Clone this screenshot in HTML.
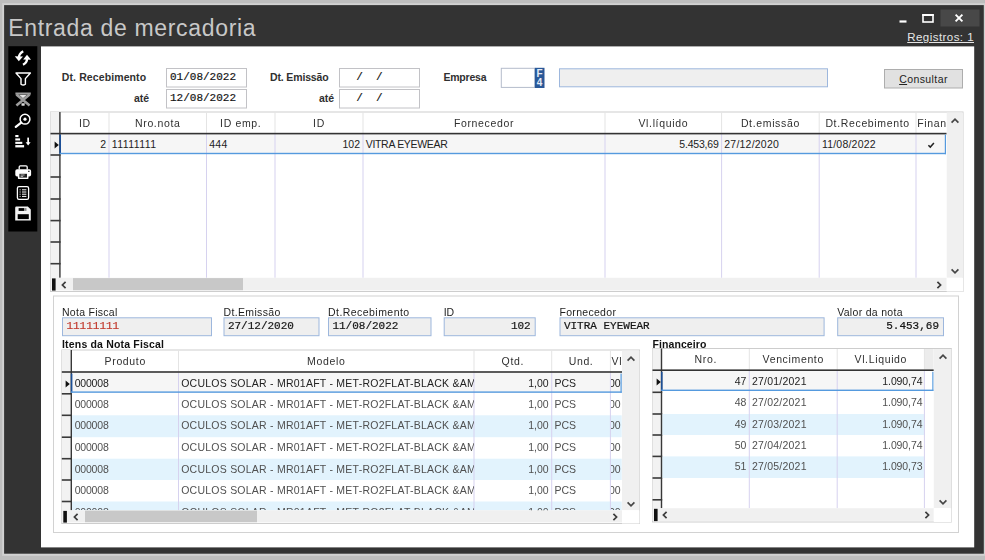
<!DOCTYPE html><html lang="pt-BR"><head><meta charset="utf-8"><title>Entrada de mercadoria</title><style>
html,body{margin:0;padding:0}
body{width:985px;height:560px;background:#bebebe;overflow:hidden;position:relative;font-family:"Liberation Sans",sans-serif;font-size:10.5px;color:#222}
div{position:absolute;box-sizing:border-box}
svg{position:absolute;overflow:visible}
.t{white-space:pre;line-height:14px;height:14px}
.lb{font-weight:bold;font-size:10.5px;color:#303030}
.ln{font-size:10.5px;color:#1e1e1e}
.mono{font-family:"Liberation Mono",monospace;font-size:11px;color:#141414;-webkit-text-stroke:0.2px}
.hd{font-size:10.5px;color:#303030;letter-spacing:0.65px}
.c{font-size:10.5px;color:#222}
.g{font-size:10.5px;color:#505050}
.inp{background:#fff;border:1px solid #bdbdbd}
.dis{background:#efefef;border:1px solid #9db7dd}
.ind{background:#f1f1f1;border-left:1px solid #d0d0d0}
</style></head><body><div id="app" style="left:0;top:0;width:985px;height:560px;filter:blur(0.4px)">
<svg style="left:0;top:0" width="985" height="560" viewBox="0 0 985 560"><rect x="2.2" y="3.2" width="983" height="552.6" fill="#d2d2d2"/><rect x="4.1" y="5.1" width="979.7" height="548.6" fill="#333"/><rect x="41" y="46.4" width="933.2" height="501" fill="#fff"/><rect x="8.3" y="46.2" width="29" height="185.3" fill="#000"/></svg>
<div class="t" style="left:8.2px;top:12.7px;font-size:23px;line-height:30px;height:30px;color:#c8c8c8;letter-spacing:0.67px">Entrada de mercadoria</div>
<svg style="left:0;top:0" width="985" height="560" viewBox="0 0 985 560"><rect x="940.5" y="9.5" width="39.0" height="17.0" fill="#484848"/></svg>
<svg style="left:895px;top:8px" width="90" height="22" viewBox="895 8 90 22"><g stroke="#fff" fill="none"><path d="M899.5 21.5h7" stroke-width="2.2"/><rect x="923" y="15" width="10" height="7" stroke-width="1.6"/><path d="M922.2 15h11.6" stroke-width="2"/><path d="M955.6 14.6l6.8 6.8M962.4 14.6l-6.8 6.8" stroke-width="1.9"/></g></svg>
<div class="t" style="right:11px;top:30px;font-size:11.5px;color:#e6e6e6;text-decoration:underline;letter-spacing:0.45px">Registros: 1</div>
<svg style="left:8px;top:46px" width="30" height="186" viewBox="8 46 30 186"><g stroke="#fff" fill="none" stroke-width="2.3"><path d="M23.2 51.2 C20.2 53 18.8 55 19 57.6"/><path d="M23 64.8 C26 63.2 27.2 61.2 27 58.4"/></g><g fill="#fff"><path d="M14.8 56.2 L23 56.6 L18.8 61.2z"/><path d="M31 59.8 L23.2 59.4 L27 54.8z"/></g><path d="M16 73 h14.4 l-5 5.6 v5.6 q-2.2 1.6 -4.4 0 v-5.6z" fill="none" stroke="#fff" stroke-width="1.4" stroke-linejoin="round"/><g stroke="#9c9c9c" fill="none"><path d="M15.4 93.6 h15.4" stroke-width="2.2"/><path d="M16.4 94.6 l13.2 11M29.6 94.6 l-13.2 11" stroke-width="2.6"/></g><path d="M19.4 95 h7.2 l-3.6 3.2z" fill="#e8e8e8"/><path d="M21.4 103.2 h3.4 l-0.2 2.6 h-3z" fill="#d8d8d8"/><g stroke="#fff" fill="none"><circle cx="25" cy="119.2" r="4.9" stroke-width="1.5"/><path d="M21.2 122.6 l-5.4 4.2" stroke-width="2.3" stroke-linecap="round"/></g><circle cx="25" cy="119.2" r="1.6" fill="#fff"/><g fill="#fff"><rect x="15.3" y="135" width="3.2" height="2.1"/><rect x="15.3" y="138.4" width="4.8" height="2.1"/><rect x="15.3" y="141.8" width="7" height="2.1"/><rect x="15.3" y="145.1" width="8.8" height="2.3"/><rect x="27.3" y="137.6" width="1.7" height="5.4"/><path d="M25.7 142.2h4.9l-2.45 3.2z"/></g><path d="M19.2 169.4 v-2.4 q0 -1.2 1.2 -1.2 h5.6 q1.2 0 1.2 1.2 v2.4" fill="none" stroke="#fff" stroke-width="1.3"/><rect x="15.3" y="169.2" width="15.8" height="7.4" rx="1.8" fill="#fff"/><rect x="17.9" y="172.6" width="10.6" height="6.4" rx="0.8" fill="#fff"/><rect x="19.4" y="173.8" width="7.6" height="3.8" fill="#222"/><path d="M20.6 175h4M20.6 176.4h2.6" stroke="#ddd" stroke-width="0.8"/><rect x="28" y="170.8" width="1.6" height="1" fill="#222"/><rect x="17.4" y="186.6" width="11.2" height="12.8" rx="1.6" fill="none" stroke="#fff" stroke-width="1.3"/><path d="M19.6 189.8h1M22 189.8h4.4M19.6 192h1M22 192h4.4M19.6 194.2h1M22 194.2h4.4M19.6 196.4h1M22 196.4h4.4" stroke="#fff" stroke-width="1"/><path d="M16.4 206.6 h11.4 l3 3 v11 h-15.6 v-12.8 q0 -1.2 1.2 -1.2z" fill="#f4f4f4"/><rect x="18.6" y="208.1" width="5.8" height="2.8" fill="#000"/><rect x="25" y="208.1" width="1.5" height="2.8" fill="#8a8a8a"/><rect x="17.7" y="214.2" width="11.1" height="4.9" fill="#000"/></svg>
<div class="t lb" style="right:838.8px;top:70px;letter-spacing:0.1px">Dt. Recebimento</div>
<div class="t lb" style="right:835.8px;top:91.4px;">até</div>
<svg style="left:0;top:0" width="985" height="560" viewBox="0 0 985 560"><rect x="166.5" y="68.5" width="80" height="18.5" fill="#fff" stroke="#c2c2c6"/></svg>
<div class="t mono" style="left:170px;top:70.3px;">01/08/2022</div>
<svg style="left:0;top:0" width="985" height="560" viewBox="0 0 985 560"><rect x="166.5" y="89.5" width="80" height="18.5" fill="#fff" stroke="#c2c2c6"/></svg>
<div class="t mono" style="left:170px;top:91.3px;">12/08/2022</div>
<svg style="left:0;top:0" width="985" height="560" viewBox="0 0 985 560"><rect x="339.5" y="68.5" width="80" height="18.5" fill="#fff" stroke="#c2c2c6"/></svg>
<div class="t mono" style="left:343px;top:70.3px;">  /  /</div>
<svg style="left:0;top:0" width="985" height="560" viewBox="0 0 985 560"><rect x="339.5" y="89.5" width="80" height="18.5" fill="#fff" stroke="#c2c2c6"/></svg>
<div class="t mono" style="left:343px;top:91.3px;">  /  /</div>
<div class="t lb" style="right:656.5px;top:70px;letter-spacing:-0.15px">Dt. Emissão</div>
<div class="t lb" style="right:650.8px;top:91.4px;">até</div>
<div class="t lb" style="left:443.4px;top:70.3px;letter-spacing:-0.2px">Empresa</div>
<svg style="left:0;top:0" width="985" height="560" viewBox="0 0 985 560"><rect x="501.3" y="68.3" width="33.6" height="19.1" fill="#fff" stroke="#b4bccb"/><rect x="534.8" y="67.8" width="9.7" height="20.2" fill="#2a5898"/></svg>
<div class="t" style="left:535px;top:68.6px;width:9.3px;text-align:center;font-size:10px;line-height:9.6px;height:20px;color:#e4ecf7;font-weight:bold;white-space:normal">F<br>4</div>
<svg style="left:0;top:0" width="985" height="560" viewBox="0 0 985 560"><rect x="559.5" y="68.8" width="268" height="18.0" fill="#efefef" stroke="#9db7dd"/><rect x="884.5" y="69.5" width="78" height="18.5" fill="#e1e1e1" stroke="#adadad"/></svg>
<div class="t" style="left:884px;width:79px;text-align:center;top:72px;font-size:10.5px;color:#222;letter-spacing:0.42px"><u>C</u>onsultar</div>
<svg style="left:0;top:0" width="985" height="560" viewBox="0 0 985 560"><rect x="50.5" y="112.0" width="912.5" height="179.5" fill="#fff" stroke="#cdcdcd"/><rect x="50.5" y="112.0" width="10.1" height="165.8" fill="#f2f2f2"/><rect x="50.5" y="154.2" width="10.1" height="1.6" fill="#3a3a3a"/><rect x="50.5" y="176.2" width="10.1" height="1.6" fill="#3a3a3a"/><rect x="50.5" y="198.2" width="10.1" height="1.6" fill="#3a3a3a"/><rect x="50.5" y="219.79999999999998" width="10.1" height="1.6" fill="#3a3a3a"/><rect x="50.5" y="241.2" width="10.1" height="1.6" fill="#3a3a3a"/><rect x="50.5" y="262.9" width="10.1" height="1.6" fill="#3a3a3a"/><rect x="108.5" y="112.5" width="1.0" height="20.5" fill="#e4e4e4"/><rect x="206.0" y="112.5" width="1.0" height="20.5" fill="#e4e4e4"/><rect x="274.5" y="112.5" width="1.0" height="20.5" fill="#e4e4e4"/><rect x="362.5" y="112.5" width="1.0" height="20.5" fill="#e4e4e4"/><rect x="604.5" y="112.5" width="1.0" height="20.5" fill="#e4e4e4"/><rect x="721.1" y="112.5" width="1.0" height="20.5" fill="#e4e4e4"/><rect x="818.7" y="112.5" width="1.0" height="20.5" fill="#e4e4e4"/><rect x="915.5" y="112.5" width="1.0" height="20.5" fill="#e4e4e4"/><rect x="60.6" y="134" width="885.4" height="20" fill="#f6f6f6"/><rect x="108.5" y="134" width="1.0" height="143.8" fill="#d6d2ef"/><rect x="206.0" y="134" width="1.0" height="143.8" fill="#d6d2ef"/><rect x="274.5" y="134" width="1.0" height="143.8" fill="#d6d2ef"/><rect x="362.5" y="134" width="1.0" height="143.8" fill="#d6d2ef"/><rect x="604.5" y="134" width="1.0" height="143.8" fill="#d6d2ef"/><rect x="721.1" y="134" width="1.0" height="143.8" fill="#d6d2ef"/><rect x="818.7" y="134" width="1.0" height="143.8" fill="#d6d2ef"/><rect x="915.5" y="134" width="1.0" height="143.8" fill="#d6d2ef"/></svg>
<div class="t hd" style="left:-15.2px;width:200px;text-align:center;top:116px;">ID</div>
<div class="t hd" style="left:57.75px;width:200px;text-align:center;top:116px;">Nro.nota</div>
<div class="t hd" style="left:140.75px;width:200px;text-align:center;top:116px;">ID emp.</div>
<div class="t hd" style="left:219.0px;width:200px;text-align:center;top:116px;">ID</div>
<div class="t hd" style="left:384.0px;width:200px;text-align:center;top:116px;">Fornecedor</div>
<div class="t hd" style="left:563.3px;width:200px;text-align:center;top:116px;">Vl.líquido</div>
<div class="t hd" style="left:670.4px;width:200px;text-align:center;top:116px;">Dt.emissão</div>
<div class="t hd" style="left:767.6px;width:200px;text-align:center;top:116px;">Dt.Recebimento</div>
<div style="left:916px;top:112.5px;width:30.5px;height:20.5px;overflow:hidden"><div class="t hd" style="left:1.2px;top:3.5px;">Finan</div></div>
<div class="t c" style="right:879px;top:137.3px;">2</div>
<div style="left:109.5px;top:134px;width:96.5px;height:20px;overflow:hidden"><div class="t c" style="left:2.2px;top:3.3px;letter-spacing:0.45px">11111111</div></div>
<div style="left:207.0px;top:134px;width:67.5px;height:20px;overflow:hidden"><div class="t c" style="left:2.2px;top:3.3px;letter-spacing:0.3px">444</div></div>
<div class="t c" style="right:625px;top:137.3px;">102</div>
<div style="left:363.5px;top:134px;width:241.0px;height:20px;overflow:hidden"><div class="t c" style="left:2.2px;top:3.3px;letter-spacing:-0.3px">VITRA EYEWEAR</div></div>
<div class="t c" style="right:266.4px;top:137.3px;letter-spacing:-0.2px">5.453,69</div>
<div style="left:722.1px;top:134px;width:96.6px;height:20px;overflow:hidden"><div class="t c" style="left:2.2px;top:3.3px;letter-spacing:0.22px">27/12/2020</div></div>
<div style="left:819.7px;top:134px;width:95.8px;height:20px;overflow:hidden"><div class="t c" style="left:2.2px;top:3.3px;letter-spacing:0.22px">11/08/2022</div></div>
<svg style="left:925.75px;top:139.70000000000002px" width="10" height="10" viewBox="0 0 10 10"><path d="M2.4 5.2l1.9 1.9l3.6-4" fill="none" stroke="#222" stroke-width="1.5"/></svg>
<svg style="left:0;top:0" width="985" height="560" viewBox="0 0 985 560"><rect x="59.2" y="112.0" width="1.4" height="165.8" fill="#383838"/><rect x="50.5" y="132.8" width="896.2" height="1.6" fill="#333"/><rect x="59.4" y="134.6" width="1.6" height="19.4" fill="#1c4f96"/><rect x="59.6" y="152.8" width="886.4" height="1.4" fill="#559ade"/><rect x="944.8" y="134.6" width="1.2" height="19.6" fill="#559ade"/></svg>
<svg style="left:50px;top:140.2px" width="12" height="10" viewBox="0 0 12 10"><path d="M4.6 1.6v6.8l4.2-3.4z" fill="#111"/></svg>
<svg style="left:0;top:0" width="985" height="560" viewBox="0 0 985 560"><rect x="946.7" y="112.5" width="16.3" height="165.3" fill="#f0f0f0"/></svg>
<svg style="left:950.1px;top:116px" width="10" height="10" viewBox="-5 -5 10 10"><path d="M-3.4 1.6L0 -1.8L3.4 1.6" fill="none" stroke="#464646" stroke-width="1.7"/></svg>
<svg style="left:950.1px;top:265.6px" width="10" height="10" viewBox="-5 -5 10 10"><path d="M-3.4 -1.6L0 1.8L3.4 -1.6" fill="none" stroke="#464646" stroke-width="1.7"/></svg>
<svg style="left:0;top:0" width="985" height="560" viewBox="0 0 985 560"><rect x="50.5" y="277.8" width="896.2" height="12.6" fill="#f0f0f0"/><rect x="946.7" y="277.8" width="16.3" height="13.7" fill="#fff"/><rect x="73" y="278.1" width="170" height="12.1" fill="#c8c8c8"/></svg>
<svg style="left:58.6px;top:279.7px" width="10" height="10" viewBox="-5 -5 10 10"><path d="M1.6 -3.2L-1.6 0L1.6 3.2" fill="none" stroke="#3c3c3c" stroke-width="1.7"/></svg>
<svg style="left:933.5px;top:279.7px" width="10" height="10" viewBox="-5 -5 10 10"><path d="M-1.6 -3.2L1.6 0L-1.6 3.2" fill="none" stroke="#3c3c3c" stroke-width="1.7"/></svg>
<svg style="left:0;top:0" width="985" height="560" viewBox="0 0 985 560"><rect x="52" y="278.40000000000003" width="3.6" height="12.2" fill="#111"/><rect x="53.5" y="296.0" width="905" height="236.5" fill="none" stroke="#d2d2d2"/></svg>
<div class="t ln" style="left:62px;top:305.4px;letter-spacing:0.27px">Nota Fiscal</div>
<svg style="left:0;top:0" width="985" height="560" viewBox="0 0 985 560"><rect x="62.5" y="317.8" width="149" height="17.9" fill="#efefef" stroke="#9db7dd"/></svg>
<div class="t mono" style="left:66.4px;top:318.9px;color:#c2392d">11111111</div>
<div class="t ln" style="left:223.5px;top:305.4px;letter-spacing:0.35px">Dt.Emissão</div>
<svg style="left:0;top:0" width="985" height="560" viewBox="0 0 985 560"><rect x="224.0" y="317.8" width="95.0" height="17.9" fill="#efefef" stroke="#9db7dd"/></svg>
<div class="t mono" style="left:227.9px;top:318.9px;">27/12/2020</div>
<div class="t ln" style="left:328px;top:305.4px;letter-spacing:0.45px">Dt.Recebimento</div>
<svg style="left:0;top:0" width="985" height="560" viewBox="0 0 985 560"><rect x="328.5" y="317.8" width="102.5" height="17.9" fill="#efefef" stroke="#9db7dd"/></svg>
<div class="t mono" style="left:332.4px;top:318.9px;">11/08/2022</div>
<div class="t ln" style="left:443.7px;top:305.4px;letter-spacing:0px">ID</div>
<svg style="left:0;top:0" width="985" height="560" viewBox="0 0 985 560"><rect x="444.2" y="317.8" width="91.0" height="17.9" fill="#efefef" stroke="#9db7dd"/></svg>
<div class="t mono" style="right:454.3px;top:318.9px;">102</div>
<div class="t ln" style="left:559.5px;top:305.4px;letter-spacing:0.3px">Fornecedor</div>
<svg style="left:0;top:0" width="985" height="560" viewBox="0 0 985 560"><rect x="560.0" y="317.8" width="264.1" height="17.9" fill="#efefef" stroke="#9db7dd"/></svg>
<div class="t mono" style="left:563.9px;top:318.9px;">VITRA EYEWEAR</div>
<div class="t ln" style="left:837.2px;top:305.4px;letter-spacing:0.31px">Valor da nota</div>
<svg style="left:0;top:0" width="985" height="560" viewBox="0 0 985 560"><rect x="837.7" y="317.8" width="105.8" height="17.9" fill="#efefef" stroke="#9db7dd"/></svg>
<div class="t mono" style="right:46px;top:318.9px;">5.453,69</div>
<div class="t lb" style="left:62px;top:337.4px;color:#111;letter-spacing:0.18px">Itens da Nota Fiscal</div>
<div class="t lb" style="left:652.4px;top:336.6px;color:#111;letter-spacing:0.1px">Financeiro</div>
<svg style="left:0;top:0" width="985" height="560" viewBox="0 0 985 560"><rect x="61.8" y="350.0" width="577.7" height="173.5" fill="#fff" stroke="#cdcdcd"/><rect x="61.8" y="350.0" width="10.2" height="160.3" fill="#f2f2f2"/><rect x="61.8" y="393.0" width="10.2" height="1.6" fill="#3a3a3a"/><rect x="61.8" y="414.5" width="10.2" height="1.6" fill="#3a3a3a"/><rect x="61.8" y="436.4" width="10.2" height="1.6" fill="#3a3a3a"/><rect x="61.8" y="457.9" width="10.2" height="1.6" fill="#3a3a3a"/><rect x="61.8" y="479.2" width="10.2" height="1.6" fill="#3a3a3a"/><rect x="61.8" y="500.7" width="10.2" height="1.6" fill="#3a3a3a"/><rect x="178.0" y="350.5" width="1.0" height="20.9" fill="#e4e4e4"/><rect x="473.5" y="350.5" width="1.0" height="20.9" fill="#e4e4e4"/><rect x="551.2" y="350.5" width="1.0" height="20.9" fill="#e4e4e4"/><rect x="609.9" y="350.5" width="1.0" height="20.9" fill="#e4e4e4"/><rect x="72" y="373" width="549.7" height="19.6" fill="#f6f6f6"/><rect x="72" y="415.3" width="549.7" height="21.9" fill="#e2f3fd"/><rect x="72" y="458.7" width="549.7" height="21.3" fill="#e2f3fd"/><rect x="72" y="501.5" width="549.7" height="8.8" fill="#e2f3fd"/><rect x="178.0" y="372.4" width="1.0" height="137.9" fill="#d6d2ef"/><rect x="473.5" y="372.4" width="1.0" height="137.9" fill="#d6d2ef"/><rect x="551.2" y="372.4" width="1.0" height="137.9" fill="#d6d2ef"/><rect x="609.9" y="372.4" width="1.0" height="137.9" fill="#d6d2ef"/></svg>
<div class="t hd" style="left:25.25px;width:200px;text-align:center;top:353.8px;">Produto</div>
<div class="t hd" style="left:226.25px;width:200px;text-align:center;top:353.8px;">Modelo</div>
<div class="t hd" style="left:412.85px;width:200px;text-align:center;top:353.8px;">Qtd.</div>
<div class="t hd" style="left:481.05px;width:200px;text-align:center;top:353.8px;">Und.</div>
<div style="left:610.4px;top:350.5px;width:11.6px;height:20.9px;overflow:hidden"><div class="t hd" style="left:1.2px;top:3.3px;">Vl</div></div>
<div style="left:72.5px;top:373px;width:105.5px;height:19.6px;overflow:hidden"><div class="t c" style="left:2.2px;top:3px;letter-spacing:-0.2px">000008</div></div>
<div style="left:179.0px;top:373px;width:294.5px;height:19.6px;overflow:hidden"><div class="t c" style="left:2.2px;top:3px;letter-spacing:0.24px">OCULOS SOLAR - MR01AFT - MET-RO2FLAT-BLACK &amp;AM</div></div>
<div class="t c" style="right:436.3px;top:376px;">1,00</div>
<div style="left:552.2px;top:373px;width:57.7px;height:19.6px;overflow:hidden"><div class="t c" style="left:2.2px;top:3px;">PCS</div></div>
<div style="left:610.9px;top:373px;width:10.8px;height:19.6px;overflow:hidden"><div class="t c" style="right:1px;top:3px">00</div></div>
<div style="left:72.5px;top:393.8px;width:105.5px;height:21.5px;overflow:hidden"><div class="t g" style="left:2.2px;top:3.0px;letter-spacing:-0.2px">000008</div></div>
<div style="left:179.0px;top:393.8px;width:294.5px;height:21.5px;overflow:hidden"><div class="t g" style="left:2.2px;top:3.0px;letter-spacing:0.24px">OCULOS SOLAR - MR01AFT - MET-RO2FLAT-BLACK &amp;AM</div></div>
<div class="t g" style="right:436.3px;top:396.8px;">1,00</div>
<div style="left:552.2px;top:393.8px;width:57.7px;height:21.5px;overflow:hidden"><div class="t g" style="left:2.2px;top:3.0px;">PCS</div></div>
<div style="left:610.9px;top:393.8px;width:10.8px;height:21.5px;overflow:hidden"><div class="t g" style="right:1px;top:3.0px">00</div></div>
<div style="left:72.5px;top:415.3px;width:105.5px;height:21.9px;overflow:hidden"><div class="t g" style="left:2.2px;top:3.0px;letter-spacing:-0.2px">000008</div></div>
<div style="left:179.0px;top:415.3px;width:294.5px;height:21.9px;overflow:hidden"><div class="t g" style="left:2.2px;top:3.0px;letter-spacing:0.24px">OCULOS SOLAR - MR01AFT - MET-RO2FLAT-BLACK &amp;AM</div></div>
<div class="t g" style="right:436.3px;top:418.3px;">1,00</div>
<div style="left:552.2px;top:415.3px;width:57.7px;height:21.9px;overflow:hidden"><div class="t g" style="left:2.2px;top:3.0px;">PCS</div></div>
<div style="left:610.9px;top:415.3px;width:10.8px;height:21.9px;overflow:hidden"><div class="t g" style="right:1px;top:3.0px">00</div></div>
<div style="left:72.5px;top:437.2px;width:105.5px;height:21.5px;overflow:hidden"><div class="t g" style="left:2.2px;top:3.0px;letter-spacing:-0.2px">000008</div></div>
<div style="left:179.0px;top:437.2px;width:294.5px;height:21.5px;overflow:hidden"><div class="t g" style="left:2.2px;top:3.0px;letter-spacing:0.24px">OCULOS SOLAR - MR01AFT - MET-RO2FLAT-BLACK &amp;AM</div></div>
<div class="t g" style="right:436.3px;top:440.2px;">1,00</div>
<div style="left:552.2px;top:437.2px;width:57.7px;height:21.5px;overflow:hidden"><div class="t g" style="left:2.2px;top:3.0px;">PCS</div></div>
<div style="left:610.9px;top:437.2px;width:10.8px;height:21.5px;overflow:hidden"><div class="t g" style="right:1px;top:3.0px">00</div></div>
<div style="left:72.5px;top:458.7px;width:105.5px;height:21.3px;overflow:hidden"><div class="t g" style="left:2.2px;top:3.0px;letter-spacing:-0.2px">000008</div></div>
<div style="left:179.0px;top:458.7px;width:294.5px;height:21.3px;overflow:hidden"><div class="t g" style="left:2.2px;top:3.0px;letter-spacing:0.24px">OCULOS SOLAR - MR01AFT - MET-RO2FLAT-BLACK &amp;AM</div></div>
<div class="t g" style="right:436.3px;top:461.7px;">1,00</div>
<div style="left:552.2px;top:458.7px;width:57.7px;height:21.3px;overflow:hidden"><div class="t g" style="left:2.2px;top:3.0px;">PCS</div></div>
<div style="left:610.9px;top:458.7px;width:10.8px;height:21.3px;overflow:hidden"><div class="t g" style="right:1px;top:3.0px">00</div></div>
<div style="left:72.5px;top:480px;width:105.5px;height:21.5px;overflow:hidden"><div class="t g" style="left:2.2px;top:3px;letter-spacing:-0.2px">000008</div></div>
<div style="left:179.0px;top:480px;width:294.5px;height:21.5px;overflow:hidden"><div class="t g" style="left:2.2px;top:3px;letter-spacing:0.24px">OCULOS SOLAR - MR01AFT - MET-RO2FLAT-BLACK &amp;AM</div></div>
<div class="t g" style="right:436.3px;top:483px;">1,00</div>
<div style="left:552.2px;top:480px;width:57.7px;height:21.5px;overflow:hidden"><div class="t g" style="left:2.2px;top:3px;">PCS</div></div>
<div style="left:610.9px;top:480px;width:10.8px;height:21.5px;overflow:hidden"><div class="t g" style="right:1px;top:3px">00</div></div>
<div style="left:72.5px;top:501.5px;width:105.5px;height:8.8px;overflow:hidden"><div class="t g" style="left:2.2px;top:3.0px;letter-spacing:-0.2px">000008</div></div>
<div style="left:179.0px;top:501.5px;width:294.5px;height:8.8px;overflow:hidden"><div class="t g" style="left:2.2px;top:3.0px;letter-spacing:0.24px">OCULOS SOLAR - MR01AFT - MET-RO2FLAT-BLACK &amp;AM</div></div>
<div class="t g" style="right:436.3px;top:504.5px;">1,00</div>
<div style="left:552.2px;top:501.5px;width:57.7px;height:8.8px;overflow:hidden"><div class="t g" style="left:2.2px;top:3.0px;">PCS</div></div>
<div style="left:610.9px;top:501.5px;width:10.8px;height:8.8px;overflow:hidden"><div class="t g" style="right:1px;top:3.0px">00</div></div>
<svg style="left:0;top:0" width="985" height="560" viewBox="0 0 985 560"><rect x="70.6" y="350.0" width="1.4" height="160.3" fill="#383838"/><rect x="61.8" y="371.2" width="560.2" height="1.6" fill="#333"/><rect x="70.8" y="373.6" width="1.6" height="19.0" fill="#1c4f96"/><rect x="71" y="391.40000000000003" width="550.7" height="1.4" fill="#559ade"/><rect x="620.5" y="373.6" width="1.2" height="19.2" fill="#559ade"/></svg>
<svg style="left:61.3px;top:379.0px" width="12" height="10" viewBox="0 0 12 10"><path d="M4.6 1.6v6.8l4.2-3.4z" fill="#111"/></svg>
<svg style="left:0;top:0" width="985" height="560" viewBox="0 0 985 560"><rect x="622" y="350.5" width="17.5" height="159.8" fill="#f0f0f0"/></svg>
<svg style="left:626.0px;top:353.6px" width="10" height="10" viewBox="-5 -5 10 10"><path d="M-3.4 1.6L0 -1.8L3.4 1.6" fill="none" stroke="#464646" stroke-width="1.7"/></svg>
<svg style="left:626.0px;top:498.8px" width="10" height="10" viewBox="-5 -5 10 10"><path d="M-3.4 -1.6L0 1.8L3.4 -1.6" fill="none" stroke="#464646" stroke-width="1.7"/></svg>
<svg style="left:0;top:0" width="985" height="560" viewBox="0 0 985 560"><rect x="61.8" y="510.3" width="560.2" height="12.1" fill="#f0f0f0"/><rect x="622" y="510.3" width="17.5" height="13.2" fill="#fff"/><rect x="85" y="510.6" width="172" height="11.6" fill="#c8c8c8"/></svg>
<svg style="left:70.5px;top:511.94999999999993px" width="10" height="10" viewBox="-5 -5 10 10"><path d="M1.6 -3.2L-1.6 0L1.6 3.2" fill="none" stroke="#3c3c3c" stroke-width="1.7"/></svg>
<svg style="left:609.7px;top:511.94999999999993px" width="10" height="10" viewBox="-5 -5 10 10"><path d="M-1.6 -3.2L1.6 0L-1.6 3.2" fill="none" stroke="#3c3c3c" stroke-width="1.7"/></svg>
<svg style="left:0;top:0" width="985" height="560" viewBox="0 0 985 560"><rect x="63.3" y="510.90000000000003" width="3.6" height="11.7" fill="#111"/><rect x="652.5" y="348.5" width="298.8" height="173.5" fill="#fff" stroke="#cdcdcd"/><rect x="652.5" y="348.5" width="9.7" height="159.7" fill="#f2f2f2"/><rect x="652.5" y="391.5" width="9.7" height="1.6" fill="#3a3a3a"/><rect x="652.5" y="413.2" width="9.7" height="1.6" fill="#3a3a3a"/><rect x="652.5" y="434.2" width="9.7" height="1.6" fill="#3a3a3a"/><rect x="652.5" y="455.59999999999997" width="9.7" height="1.6" fill="#3a3a3a"/><rect x="652.5" y="477.2" width="9.7" height="1.6" fill="#3a3a3a"/><rect x="652.5" y="499.0" width="9.7" height="1.6" fill="#3a3a3a"/><rect x="748.8" y="349" width="1.0" height="20.6" fill="#e4e4e4"/><rect x="836.7" y="349" width="1.0" height="20.6" fill="#e4e4e4"/><rect x="923.9" y="349" width="1.0" height="20.6" fill="#e4e4e4"/><rect x="662.2" y="371.2" width="262.2" height="19.6" fill="#f6f6f6"/><rect x="662.2" y="414" width="262.2" height="21" fill="#e2f3fd"/><rect x="662.2" y="456.4" width="262.2" height="21.6" fill="#e2f3fd"/><rect x="748.8" y="370.6" width="1.0" height="137.6" fill="#d6d2ef"/><rect x="836.7" y="370.6" width="1.0" height="137.6" fill="#d6d2ef"/><rect x="923.9" y="370.6" width="1.0" height="137.6" fill="#d6d2ef"/><rect x="924.9" y="349" width="8.6" height="20.6" fill="#ececec"/></svg>
<div class="t hd" style="left:605.75px;width:200px;text-align:center;top:352.4px;">Nro.</div>
<div class="t hd" style="left:693.25px;width:200px;text-align:center;top:352.4px;">Vencimento</div>
<div class="t hd" style="left:780.8px;width:200px;text-align:center;top:352.4px;">Vl.Liquido</div>
<div class="t c" style="right:238.7px;top:374.2px;">47</div>
<div style="left:749.8px;top:371.2px;width:86.9px;height:19.6px;overflow:hidden"><div class="t c" style="left:2.2px;top:3.0px;letter-spacing:0.22px">27/01/2021</div></div>
<div class="t c" style="right:62.6px;top:374.2px;letter-spacing:-0.1px">1.090,74</div>
<div class="t g" style="right:238.7px;top:395.3px;">48</div>
<div style="left:749.8px;top:392.3px;width:86.9px;height:21.7px;overflow:hidden"><div class="t g" style="left:2.2px;top:3.0px;letter-spacing:0.22px">27/02/2021</div></div>
<div class="t g" style="right:62.6px;top:395.3px;letter-spacing:-0.1px">1.090,74</div>
<div class="t g" style="right:238.7px;top:417px;">49</div>
<div style="left:749.8px;top:414px;width:86.9px;height:21px;overflow:hidden"><div class="t g" style="left:2.2px;top:3px;letter-spacing:0.22px">27/03/2021</div></div>
<div class="t g" style="right:62.6px;top:417px;letter-spacing:-0.1px">1.090,74</div>
<div class="t g" style="right:238.7px;top:438px;">50</div>
<div style="left:749.8px;top:435px;width:86.9px;height:21.4px;overflow:hidden"><div class="t g" style="left:2.2px;top:3px;letter-spacing:0.22px">27/04/2021</div></div>
<div class="t g" style="right:62.6px;top:438px;letter-spacing:-0.1px">1.090,74</div>
<div class="t g" style="right:238.7px;top:459.4px;">51</div>
<div style="left:749.8px;top:456.4px;width:86.9px;height:21.6px;overflow:hidden"><div class="t g" style="left:2.2px;top:3.0px;letter-spacing:0.22px">27/05/2021</div></div>
<div class="t g" style="right:62.6px;top:459.4px;letter-spacing:-0.1px">1.090,73</div>
<svg style="left:0;top:0" width="985" height="560" viewBox="0 0 985 560"><rect x="660.8000000000001" y="348.5" width="1.4" height="159.7" fill="#383838"/><rect x="652.5" y="369.40000000000003" width="281.3" height="1.6" fill="#333"/><rect x="661.0" y="371.8" width="1.6" height="19.0" fill="#1c4f96"/><rect x="661.2" y="389.6" width="272.3" height="1.4" fill="#559ade"/><rect x="932.3" y="371.8" width="1.2" height="19.2" fill="#559ade"/></svg>
<svg style="left:652px;top:377.2px" width="12" height="10" viewBox="0 0 12 10"><path d="M4.6 1.6v6.8l4.2-3.4z" fill="#111"/></svg>
<svg style="left:0;top:0" width="985" height="560" viewBox="0 0 985 560"><rect x="933.8" y="349" width="17.5" height="159.2" fill="#f0f0f0"/></svg>
<svg style="left:937.8px;top:352px" width="10" height="10" viewBox="-5 -5 10 10"><path d="M-3.4 1.6L0 -1.8L3.4 1.6" fill="none" stroke="#464646" stroke-width="1.7"/></svg>
<svg style="left:937.8px;top:497px" width="10" height="10" viewBox="-5 -5 10 10"><path d="M-3.4 -1.6L0 1.8L3.4 -1.6" fill="none" stroke="#464646" stroke-width="1.7"/></svg>
<svg style="left:0;top:0" width="985" height="560" viewBox="0 0 985 560"><rect x="652.5" y="508.2" width="281.3" height="12.7" fill="#f0f0f0"/><rect x="933.8" y="508.2" width="17.5" height="13.8" fill="#fff"/></svg>
<svg style="left:660px;top:510.15px" width="10" height="10" viewBox="-5 -5 10 10"><path d="M1.6 -3.2L-1.6 0L1.6 3.2" fill="none" stroke="#3c3c3c" stroke-width="1.7"/></svg>
<svg style="left:922px;top:510.15px" width="10" height="10" viewBox="-5 -5 10 10"><path d="M-1.6 -3.2L1.6 0L-1.6 3.2" fill="none" stroke="#3c3c3c" stroke-width="1.7"/></svg>
<svg style="left:0;top:0" width="985" height="560" viewBox="0 0 985 560"><rect x="654" y="508.8" width="3.6" height="12.3" fill="#111"/></svg>
</div></body></html>
